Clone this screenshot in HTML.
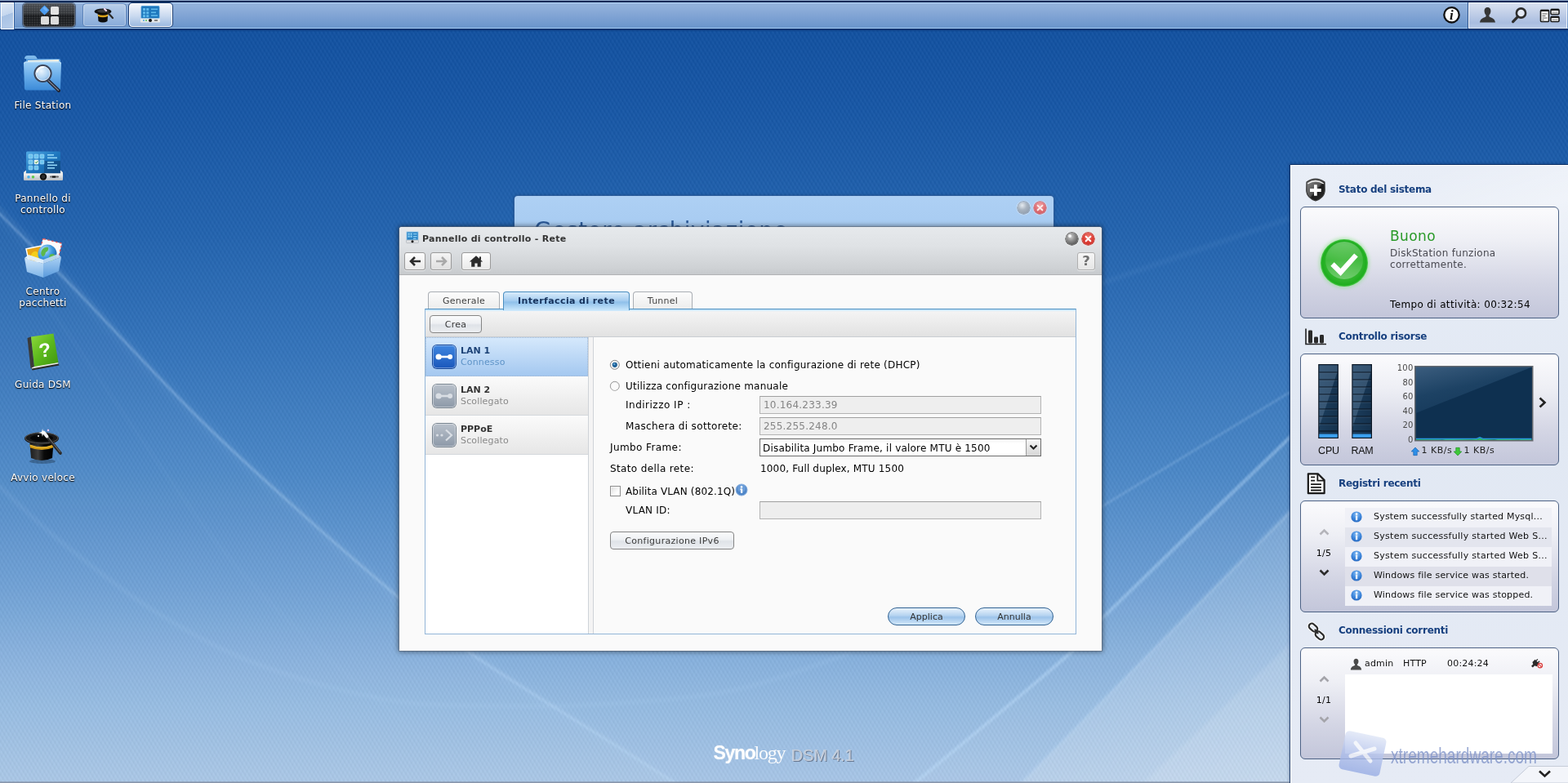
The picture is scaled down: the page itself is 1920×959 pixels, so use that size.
<!DOCTYPE html>
<html lang="it">
<head>
<meta charset="utf-8">
<title>Synology DiskStation - Pannello di controllo - Rete</title>
<style>
*{box-sizing:border-box;margin:0;padding:0}
html,body{width:1920px;height:959px;overflow:hidden}
body{position:relative;font-family:"DejaVu Sans","Liberation Sans",sans-serif;font-size:12px;color:#000;letter-spacing:.23px;
 background:#2a6ab4;}
#root{position:absolute;left:0;top:0;width:1920px;height:959px;overflow:hidden;will-change:transform}
.abs{position:absolute}
#bg{position:absolute;left:0;top:0;width:1920px;height:959px}
/* top bar */
#topbar{position:absolute;left:0;top:0;width:1920px;height:39px;background:linear-gradient(#0a2856 0,#0a2856 3px,#0a2856 34px,#07306c 36px,rgba(10,60,130,.75) 37px,rgba(14,76,156,0) 39px)}
#topbar .bar{position:absolute;left:0;top:3px;width:1920px;height:32px;
 background:linear-gradient(#bcd9fb 0,#bcd9fb 1px,#94b3dc 1.5px,#8aabd8 30%,#7ba0d2 62%,#6b96cb 30.5px,#a9cff8 31px,#a9cff8 32px)}
#topbar .hl{position:absolute;left:0;top:0;width:1920px;height:1px;background:#8fa5c8}
.tbtn{position:absolute;top:4px;height:29px;border-radius:4px}
/* desktop icons */
.dicon{position:absolute;left:0;width:105px;text-align:center;color:#fff;font-size:12px;line-height:14px;
 text-shadow:0 1px 1px rgba(0,0,0,.9),0 1px 2px rgba(0,0,0,.6);letter-spacing:.28px}
/* windows */
.win{position:absolute;background:#fafafa;border-radius:3px 3px 0 0;box-shadow:0 0 0 1px rgba(90,100,115,.5),0 0 6px 1px rgba(0,0,0,.5)}
.wbtn{position:absolute;width:15px;height:15px;border-radius:50%}
.nav{position:absolute;top:31px;height:22px;border:1px solid #9a9a9a;border-radius:3px;
 background:linear-gradient(#fdfdfd,#e9e9e9);box-shadow:0 1px 0 rgba(255,255,255,.6)}
.tab{position:absolute;top:79px;height:22px;border:1px solid #a9aeb4;border-bottom:none;border-radius:4px 4px 0 0;
 background:linear-gradient(#fcfcfc,#ececec);color:#444;text-align:center;line-height:22px;font-size:11px;letter-spacing:.25px}
.tab.on{border-color:#4a8ec0;background:linear-gradient(#d9ecfb 0,#a8cef0 45%,#8fc0ea 55%,#c8e6fb 100%);color:#15325c;font-weight:bold;font-size:11px;letter-spacing:.4px}
.lbl{position:absolute;white-space:nowrap;line-height:16px;height:16px}
.inp{position:absolute;left:441px;width:345px;height:22px;border:1px solid #b4b4b4;border-top-color:#a0a0a0;background:#eee;color:#858585;
 padding-left:4px;line-height:21px;font-size:12px;letter-spacing:.22px}
.gbtn{position:absolute;height:22px;border:1px solid #858585;border-radius:4px;background:linear-gradient(#fafbfc 0,#eef0f3 45%,#dfe3e8 55%,#eceef1 100%);
 text-align:center;line-height:21px;color:#3c3c3c;font-size:11px;letter-spacing:.3px}
.pill{position:absolute;top:466px;height:22px;border:1px solid #2f6192;border-radius:11px;
 background:linear-gradient(#e9f3fc 0,#b5d3f0 45%,#9cc3ea 55%,#d3e8fa 100%);text-align:center;line-height:21px;color:#333;font-size:11px;letter-spacing:0}
.li{position:absolute;left:0;width:199px;height:48px;background:linear-gradient(#fbfbfb,#e6e6e6);border-bottom:1px solid #d4d8dc}
.li.on{background:linear-gradient(#d6e9fc,#a4c8f0)}
.li b{position:absolute;left:43px;top:10px;font-size:11px;line-height:14px;color:#333;letter-spacing:0}
.li span{position:absolute;left:43px;top:24px;font-size:11px;line-height:14px;color:#8a8a8a;letter-spacing:.15px}
.li.on b{color:#1d4377}.li.on span{color:#5f94c8}
.lic{position:absolute;left:9px;top:10px;width:28px;height:28px;border-radius:5px}
/* widgets */
#wp{position:absolute;left:1580px;top:202px;width:340px;height:757px;background:linear-gradient(#e9eef7,#e1e8f3 40%,#e6ebf5);
 box-shadow:-1px 0 0 rgba(10,40,90,.8),0 -1px 0 rgba(10,40,90,.8),-2px -2px 3px rgba(0,20,60,.25),inset 1px 1px 0 rgba(255,255,255,.9)}
.wt{position:absolute;left:59px;font-weight:bold;font-size:12px;color:#17407f;white-space:nowrap;line-height:16px;letter-spacing:-.27px}
.card{position:absolute;left:12px;width:317px;height:137px;border:1px solid #4d6285;border-radius:6px;
 background:linear-gradient(#fbfbfd 0,#eeeff5 30%,#d3d5e4 70%,#c3c6da 100%)}
.row{position:absolute;left:54px;width:253px;height:24px;font-size:11px;line-height:22px;letter-spacing:.2px;white-space:nowrap;color:#111}
.row i{position:absolute;left:7px;top:4px;width:14px;height:14px}
.row span{position:absolute;left:35px;top:0}
</style>
</head>
<body>
<div id="root">
<svg id="bg" width="1920" height="959" viewBox="0 0 1920 959">
 <defs>
  <linearGradient id="bgg" x1="0" y1="0" x2="0" y2="1">
   <stop offset="0" stop-color="#0f4f9f"/>
   <stop offset=".12" stop-color="#1555a5"/>
   <stop offset=".3" stop-color="#2263af"/>
   <stop offset=".45" stop-color="#3474bb"/>
   <stop offset=".6" stop-color="#4a87c7"/>
   <stop offset=".75" stop-color="#6c9fd5"/>
   <stop offset=".83" stop-color="#84afdd"/>
   <stop offset=".9" stop-color="#95bbe2"/>
   <stop offset="1" stop-color="#a8c6e7"/>
  </linearGradient>
  <linearGradient id="wdg" x1="0" y1="0" x2="1" y2="1">
   <stop offset="0" stop-color="#fff" stop-opacity=".28"/>
   <stop offset=".5" stop-color="#fff" stop-opacity=".2"/>
   <stop offset="1" stop-color="#fff" stop-opacity=".3"/>
  </linearGradient>
  <pattern id="hatch" width="4.6" height="4.3" patternUnits="userSpaceOnUse" patternTransform="rotate(58)">
   <rect width="4.6" height="2.15" fill="#fff" opacity=".022"/>
   <rect y="2.15" width="4.6" height="2.15" fill="#000" opacity=".022"/>
  </pattern>
  <pattern id="hatch2" width="5" height="4.6" patternUnits="userSpaceOnUse" patternTransform="rotate(-63)">
   <rect width="5" height="2.5" fill="#fff" opacity=".012"/>
   <rect y="2.5" width="5" height="2.5" fill="#000" opacity=".012"/>
  </pattern>
  <filter id="b1" x="-20%" y="-20%" width="140%" height="140%"><feGaussianBlur stdDeviation="1"/></filter>
  <filter id="b2" x="-20%" y="-20%" width="140%" height="140%"><feGaussianBlur stdDeviation="2"/></filter>
  <filter id="b6" x="-20%" y="-20%" width="140%" height="140%"><feGaussianBlur stdDeviation="6"/></filter>
 </defs>
 <rect width="1920" height="959" fill="url(#bgg)"/>
 <!-- light wedges bottom-right -->
 <path d="M1250 959 L1580 625 L1620 590 L1620 959 Z" fill="url(#wdg)" filter="url(#b1)"/>
 <path d="M1400 959 L1620 750 L1620 959 Z" fill="#fff" opacity=".1" filter="url(#b2)"/>
 <path d="M1120 959 L1310 800 L1580 535 L1620 500 L1620 590 L1250 959 Z" fill="#fff" opacity=".05"/>
 <path d="M0 251 C20 272 64 316 103 358 C142 400 195 459 237 501 C279 543 314 574 356 612 C398 650 449 694 487 726 C525 758 540 771 586 802 C632 833 714 883 760 912 L830 959 L0 959 Z" fill="#fff" opacity=".035"/>
 <g fill="none" stroke="#bfe0ff" stroke-linecap="round">
  <g transform="translate(0 5)">
  <path d="M-20 236 C-17 240 -20 236 0 257 C20 278 64 320 103 361 C142 402 195 459 237 501 C279 543 314 574 356 612 C398 650 449 694 487 726 C525 758 540 771 586 802 C632 833 714 883 760 912 C806 941 843 964 860 975" stroke-width="10" opacity=".07" filter="url(#b6)"/>
  <path d="M-20 236 C-17 240 -20 236 0 257 C20 278 64 320 103 361 C142 402 195 459 237 501 C279 543 314 574 356 612 C398 650 449 694 487 726 C525 758 540 771 586 802 C632 833 714 883 760 912 C806 941 843 964 860 975" stroke-width="3" opacity=".3" filter="url(#b1)"/>
  </g>
  <path d="M-20 578 C-17 581 -16 581 0 596 C16 611 46 641 79 667 C112 693 158 730 198 754 C238 778 271 797 317 814 C363 831 422 848 475 857 C528 866 586 864 633 865 C680 866 716 864 760 861 C804 858 853 855 900 845 C947 835 1017 808 1040 800" stroke-width="4" opacity=".13" filter="url(#b2)"/>
  <path d="M60 380 C64 386 54 368 87 414 C120 460 212 597 261 659 C310 721 342 749 380 786 C418 823 457 851 490 881 C523 911 565 951 580 965" stroke-width="3" opacity=".05" filter="url(#b2)"/>
  <path d="M1340 626 C1380 602 1533 508 1580 480 C1627 452 1613 460 1620 456" stroke-width="3" opacity=".2" filter="url(#b1)"/>
  <path d="M1100 977 C1103 974 1085 988 1120 959 C1155 930 1272 834 1310 800 C1348 766 1305 801 1350 757 C1395 713 1535 578 1580 535 C1625 492 1613 503 1620 497" stroke-width="4.5" opacity=".4" filter="url(#b1)"/>
  <path d="M1340 350 C1380 336 1533 283 1580 267 C1627 251 1613 256 1620 254" stroke-width="6" opacity=".06" filter="url(#b2)"/>
  <path d="M1250 959 L1620 585" stroke-width="4" opacity=".2" filter="url(#b2)"/>
 </g>
 <rect width="1920" height="959" fill="url(#hatch)"/>
 <rect width="1920" height="959" fill="url(#hatch2)"/>
 <rect x="0" y="957.4" width="1920" height="1.6" fill="#8592a8" opacity=".95"/>
</svg>
<div id="topbar">
 <div class="hl"></div>
 <div class="bar"></div>
 <!-- show desktop -->
 <div class="abs" style="left:1px;top:3px;width:15.5px;height:32.5px;border:1.5px solid #fff;border-right-width:1px;background:linear-gradient(160deg,#dfe9f6 0,#c4d6ee 45%,#a8c2e4 46%,#b7cdea 100%);box-shadow:1px 0 0 #35609c"></div>
 <!-- main menu -->
 <div class="tbtn" style="left:28px;width:64px;background:radial-gradient(rgba(255,255,255,.13) .8px,rgba(255,255,255,0) 1.1px) 0 0/3px 3px,linear-gradient(#4a4d52 0,#33363a 45%,#1a1c1f 50%,#222427 100%);border:1px solid #5d6672;box-shadow:0 0 0 1px rgba(20,30,50,.55)">
  <svg width="62" height="27" viewBox="0 0 62 27" style="position:absolute;left:0;top:0">
   <rect x="21.2" y="3.2" width="8.6" height="8.6" rx="1.2" transform="rotate(45 25.5 7.5)" fill="#4c9cf0"/>
   <rect x="22.2" y="4.2" width="6" height="3" rx="1" transform="rotate(45 25.5 7.5)" fill="#7ebcff" opacity=".7"/>
   <rect x="33" y="3" width="10" height="10" rx="1.5" fill="#e3e3e3"/>
   <rect x="21" y="15" width="10" height="10" rx="1.5" fill="#dcdcdc"/>
   <rect x="33" y="15" width="10" height="10" rx="1.5" fill="#dcdcdc"/>
  </svg>
 </div>
 <!-- quick start -->
 <div class="tbtn" style="left:101px;width:54px;border:1px solid #5b82b8;background:linear-gradient(#b9cfeb,#88abd9);box-shadow:inset 0 0 0 1px rgba(255,255,255,.35)">
  <svg width="30" height="27" viewBox="0 0 30 27" style="position:absolute;left:11px;top:0">
   <ellipse cx="13" cy="9" rx="10.5" ry="3.6" fill="#111"/>
   <path d="M6.5 9 L7.5 21 Q13 24 18.5 21 L19.5 9 Z" fill="#0c0c0c"/>
   <path d="M6.8 12.5 Q13 15 19.2 12.5 L19 15 Q13 17.5 7 15 Z" fill="#d9a21a"/>
   <ellipse cx="13" cy="8.6" rx="7" ry="2" fill="#3a3a3a"/>
   <path d="M16 7 L25 17" stroke="#2a2a2a" stroke-width="2.2" stroke-linecap="round"/>
   <path d="M15 6 L17 8" stroke="#f4d8f0" stroke-width="2.2" stroke-linecap="round"/>
  </svg>
 </div>
 <!-- active: control panel -->
 <div class="tbtn" style="left:157.5px;width:53px;border:1.5px solid #fff;background:linear-gradient(#f4f7fc 0,#c9d9ef 55%,#9dbae0 100%);box-shadow:0 0 0 1px #1e3f74">
  <svg width="24" height="22" viewBox="0 0 24 22" style="position:absolute;left:13px;top:2px">
   <rect x="1" y="0.5" width="22" height="15" rx="1" fill="#1f78bd"/>
   <rect x="1" y="0.5" width="22" height="15" rx="1" fill="none" stroke="#4a9ad6" stroke-width=".8"/>
   <g fill="#5fb8ea"><rect x="3" y="3" width="3" height="3"/><rect x="7.2" y="3" width="3" height="3"/><rect x="3" y="7.2" width="3" height="3"/><rect x="7.2" y="7.2" width="3" height="3"/><rect x="3" y="11.2" width="3" height="3"/><rect x="7.2" y="11.2" width="3" height="3"/>
   <rect x="13" y="3.5" width="8" height="1.6"/><rect x="13" y="7.5" width="6" height="1.6"/><rect x="13" y="11.2" width="8" height="1.6"/></g>
   <rect x="0" y="15.5" width="24" height="5" rx="1.2" fill="#e6e8ea"/>
   <circle cx="12" cy="18" r="2" fill="#111"/>
   <circle cx="4" cy="18" r="1" fill="#4aa4e0"/><circle cx="7" cy="18" r="1" fill="#5ac85a"/>
   <rect x="17" y="17.3" width="4" height="1.4" fill="#555"/>
  </svg>
 </div>
 <!-- info -->
 <svg class="abs" style="left:1766px;top:7px" width="23" height="23" viewBox="0 0 23 23">
  <circle cx="11.5" cy="11.3" r="9.2" fill="#fdfdfd" stroke="#111" stroke-width="2.3"/>
  <text x="11.3" y="17" text-anchor="middle" font-family="Liberation Serif,serif" font-style="italic" font-weight="bold" font-size="17" fill="#111" letter-spacing="0">i</text>
 </svg>
 <!-- tray -->
 <div class="abs" style="left:1797px;top:3px;width:1px;height:32px;background:#2d5590"></div>
 <div class="abs" style="left:1798px;top:3px;width:121px;height:32px;border:1px solid #f2f6fc;border-bottom-color:#e0e9f6;background:linear-gradient(#d9e1f0 0,#bccbe6 50%,#a9bde0 80%,#b7c9e6 100%)"></div>
 <svg class="abs" style="left:1810px;top:7px" width="24" height="24" viewBox="0 0 24 24">
  <path d="M11.5 2 C8.6 2 7.4 4.3 7.6 7 C7.8 9.3 8.6 10.6 9.6 11.6 L9.4 13.4 C6.6 14.8 2.6 15.6 2 20.5 L21 20.5 C20.4 15.6 16.4 14.8 13.6 13.4 L13.4 11.6 C14.4 10.6 15.2 9.3 15.4 7 C15.6 4.3 14.4 2 11.5 2 Z" fill="#363636"/>
 </svg>
 <svg class="abs" style="left:1849px;top:7px" width="24" height="24" viewBox="0 0 24 24">
  <circle cx="13.5" cy="9" r="5.6" fill="#e4eaf5" stroke="#2d2d2d" stroke-width="2.6"/>
  <path d="M9.6 13.4 L3.6 19.6" stroke="#2d2d2d" stroke-width="3.2" stroke-linecap="round"/>
 </svg>
 <svg class="abs" style="left:1885px;top:9px" width="26" height="20" viewBox="0 0 26 20">
  <rect x="1.5" y="3.5" width="10" height="14" rx="1" fill="#fff" stroke="#1a1a1a" stroke-width="1.6"/>
  <rect x="1.5" y="2.8" width="10" height="2.2" fill="#1a1a1a"/>
  <path d="M3.5 8h6M3.5 10.5h4M3.5 13h6M3.5 15.3h2" stroke="#555" stroke-width="1"/>
  <rect x="14" y="2.5" width="10" height="6" rx="1" fill="#fff" stroke="#1a1a1a" stroke-width="1.6"/>
  <rect x="14" y="1.8" width="10" height="2.2" fill="#1a1a1a"/>
  <rect x="14" y="11.5" width="10" height="6" rx="1" fill="#fff" stroke="#1a1a1a" stroke-width="1.6"/>
  <rect x="14" y="10.8" width="10" height="2.2" fill="#1a1a1a"/>
  <path d="M16 6h1.5M18.3 6h1.5M20.6 6h1.5M16 15h1.5M18.3 15h1.5M20.6 15h1.5" stroke="#444" stroke-width="1"/>
 </svg>
</div>
<!-- File Station -->
<svg class="abs" style="left:26px;top:64px" width="54" height="52" viewBox="0 0 54 52">
 <defs>
  <linearGradient id="fs1" x1="0" y1="0" x2="0" y2="1"><stop offset="0" stop-color="#9fd0f6"/><stop offset=".5" stop-color="#69adea"/><stop offset="1" stop-color="#3c8bd8"/></linearGradient>
  <radialGradient id="fs2" cx=".4" cy=".35" r=".7"><stop offset="0" stop-color="#f4faff"/><stop offset=".6" stop-color="#b8d8f4"/><stop offset="1" stop-color="#7fb4e6"/></radialGradient>
 </defs>
 <path d="M4 8 Q4 4 8 4 L16 4 Q18 4 19 6.5 L20 8.5 Z" fill="#7db8ea"/>
 <path d="M6 8 L46 8 Q48 8 48 10 L48 14 L6 14 Z" fill="#5a9ede"/>
 <path d="M8 10 L46 9 L46.5 13 L8 14 Z" fill="#f6f3e4"/>
 <path d="M3 14 Q3 11.5 5.5 11.5 L46.5 11.5 Q49 11.5 49 14 L48 44 Q48 46.5 45.5 46.5 L6.5 46.5 Q4 46.5 4 44 Z" fill="url(#fs1)"/>
 <path d="M3.5 13.8 Q3.5 12 5.5 12 L46.5 12 Q48.5 12 48.5 13.8" fill="none" stroke="#c9e6fb" stroke-width="1"/>
 <path d="M31.5 33 L46 47" stroke="#1f2433" stroke-width="4" stroke-linecap="round"/>
 <path d="M31.5 33 L45.5 46.5" stroke="#7f8796" stroke-width="1.3" stroke-linecap="round"/>
 <circle cx="26.5" cy="26" r="10" fill="url(#fs2)" stroke="#3b4458" stroke-width="2.2" fill-opacity=".92"/>
 <circle cx="26.5" cy="26" r="8.6" fill="none" stroke="#e8eef6" stroke-width="1"/>
 <path d="M19.5 24 Q21 18.5 27 18" fill="none" stroke="#fff" stroke-width="2" stroke-linecap="round" opacity=".9"/>
</svg>
<div class="dicon" style="top:122px">File Station</div>
<!-- Pannello di controllo -->
<svg class="abs" style="left:26px;top:183px" width="54" height="42" viewBox="0 0 54 42">
 <defs>
  <linearGradient id="cp1" x1="0" y1="0" x2="1" y2="1"><stop offset="0" stop-color="#4fa8e4"/><stop offset=".5" stop-color="#1f78c0"/><stop offset="1" stop-color="#135a9c"/></linearGradient>
  <linearGradient id="cp2" x1="0" y1="0" x2="0" y2="1"><stop offset="0" stop-color="#f4f5f6"/><stop offset="1" stop-color="#b9bdc2"/></linearGradient>
 </defs>
 <rect x="6" y="2.5" width="42" height="27" rx="1.5" fill="url(#cp1)"/>
 <rect x="28" y="14" width="20" height="15" fill="#0f3f74" opacity=".55"/>
 <g fill="#6cc4f0" stroke="#bfe6fb" stroke-width=".5">
  <rect x="9" y="6" width="5" height="5" rx="1"/><rect x="16" y="6" width="5" height="5" rx="1"/><rect x="23" y="6" width="5" height="5" rx="1"/>
  <rect x="9" y="13" width="5" height="5" rx="1"/><rect x="23" y="13" width="5" height="5" rx="1"/>
  <rect x="9" y="20" width="5" height="5" rx="1"/><rect x="16" y="20" width="5" height="5" rx="1"/>
 </g>
 <rect x="16" y="13" width="5" height="5" rx="1" fill="#eaf6e8" stroke="#fff" stroke-width=".5"/>
 <path d="M17 15.4l1.3 1.4 2-2.6" fill="none" stroke="#2e8a3a" stroke-width="1"/>
 <g fill="#8fd4f6"><rect x="32" y="6" width="8" height="1.6"/><rect x="32" y="9.5" width="12" height="1.6"/><rect x="32" y="15" width="8" height="1.6"/><rect x="32" y="18.5" width="12" height="1.6"/><rect x="32" y="22" width="9" height="1.6"/></g>
 <path d="M3 28 L6 25.5 L6 29.5 L48 29.5 L48 25.5 L51 28 L51 36 Q51 38 49 38 L5 38 Q3 38 3 36 Z" fill="url(#cp2)"/>
 <rect x="3" y="29.5" width="48" height="8.5" rx="1.6" fill="url(#cp2)"/>
 <circle cx="27" cy="33.5" r="4.2" fill="#0d0d0d"/><circle cx="27" cy="33.5" r="2.4" fill="#2c2c2c"/>
 <circle cx="9" cy="33.8" r="1.8" fill="#4ab0ea"/><circle cx="14.5" cy="33.8" r="1.8" fill="#5fcb4e"/>
 <rect x="35" y="32.6" width="11" height="2" rx="1" fill="#666"/><rect x="38" y="32.6" width="4" height="2" fill="#111"/>
</svg>
<div class="dicon" style="top:236px">Pannello di<br>controllo</div>
<!-- Centro pacchetti -->
<svg class="abs" style="left:26px;top:292px" width="54" height="50" viewBox="0 0 54 50">
 <defs>
  <linearGradient id="pk1" x1="0" y1="0" x2="0" y2="1"><stop offset="0" stop-color="#cfe6fb"/><stop offset="1" stop-color="#7db4e8"/></linearGradient>
  <linearGradient id="pk2" x1="0" y1="0" x2="0" y2="1"><stop offset="0" stop-color="#a9d0f4"/><stop offset="1" stop-color="#5a9adc"/></linearGradient>
  <radialGradient id="pk3" cx=".35" cy=".3" r=".8"><stop offset="0" stop-color="#bfe4fb"/><stop offset=".5" stop-color="#3f9ae0"/><stop offset="1" stop-color="#155a9e"/></radialGradient>
 </defs>
 <rect x="24" y="3" width="24" height="18" rx="1" transform="rotate(14 36 12)" fill="#fbfbfb" stroke="#e25a5a" stroke-width="1.4" stroke-dasharray="2.5 2.5"/>
 <rect x="7" y="10" width="20" height="20" transform="rotate(-12 17 20)" fill="#fff"/>
 <rect x="8.5" y="11.5" width="17" height="17" transform="rotate(-12 17 20)" fill="#e8a416"/>
 <path d="M11 22 Q15 13 20 17 Q24 20 22 27 Z" fill="#f6d21a" opacity=".9"/>
 <circle cx="32" cy="19" r="11.5" fill="url(#pk3)"/>
 <path d="M25 15 Q28 10 33 11 Q34 15 30 17 Q29 22 26 22 Q23 19 25 15 Z M35 20 Q40 17 42 22 Q40 28 36 28 Q33 24 35 20 Z" fill="#5cb84a"/>
 <path d="M4 24 L27 31 L27 48 L7 41 Z" fill="url(#pk1)"/>
 <path d="M27 31 L49 23 L46 40 L27 48 Z" fill="url(#pk2)"/>
 <path d="M4 24 L9 20 L27 26 L27 31 Z" fill="#e3f1fd" opacity=".95"/>
 <path d="M27 31 L27 26 L45 19 L49 23 Z" fill="#c2dcf6" opacity=".9"/>
</svg>
<div class="dicon" style="top:350px">Centro<br>pacchetti</div>
<!-- Guida DSM -->
<svg class="abs" style="left:30px;top:406px" width="46" height="50" viewBox="0 0 46 50">
 <defs>
  <linearGradient id="gd1" x1="0" y1="0" x2="1" y2="1"><stop offset="0" stop-color="#8fda3c"/><stop offset=".5" stop-color="#5cb81c"/><stop offset="1" stop-color="#3d9410"/></linearGradient>
 </defs>
 <path d="M8 44 L41 38.5 L42.5 41.5 L9.5 47.5 Z" fill="#2b2b2b"/>
 <path d="M8.5 43 L41 37.5 L41.5 39.5 L9 45.5 Z" fill="#e9e9e4"/>
 <path d="M3.5 8 L8 6.5 L12 43 L7.5 45 Z" fill="#3a3a3a"/>
 <path d="M8 6.5 L35.5 2.5 L41.5 38 L12 43 Z" fill="url(#gd1)"/>
 <text x="25" y="31" text-anchor="middle" font-family="Liberation Sans,sans-serif" font-weight="bold" font-size="24" fill="#fff" transform="rotate(-8 25 24)" letter-spacing="0">?</text>
</svg>
<div class="dicon" style="top:464px">Guida DSM</div>
<!-- Avvio veloce -->
<svg class="abs" style="left:26px;top:520px" width="54" height="52" viewBox="0 0 54 52">
 <defs>
  <linearGradient id="ht1" x1="0" y1="0" x2="1" y2="0"><stop offset="0" stop-color="#1a1a1a"/><stop offset=".35" stop-color="#3c3c3c"/><stop offset=".6" stop-color="#0a0a0a"/><stop offset="1" stop-color="#000"/></linearGradient>
 </defs>
 <ellipse cx="26" cy="45" rx="16" ry="3" fill="#000" opacity=".25"/>
 <path d="M10 17 L12 41 Q25 47 38 41 L40 17 Z" fill="url(#ht1)"/>
 <path d="M10.6 24.5 Q25 30 39.4 24.5 L39.1 28.2 Q25 33.8 10.9 28.2 Z" fill="#d39a14"/>
 <path d="M10.7 25.3 Q25 31 39.3 25.3" fill="none" stroke="#f2c848" stroke-width=".8"/>
 <ellipse cx="25" cy="17" rx="21" ry="7.5" fill="#1a1a1a"/>
 <ellipse cx="25" cy="16.4" rx="20" ry="6.6" fill="none" stroke="#5a5a5a" stroke-width="1"/>
 <ellipse cx="25" cy="16.5" rx="14" ry="4.2" fill="#050505"/>
 <path d="M30 13 L48 35" stroke="#2a2a2a" stroke-width="3.6" stroke-linecap="round"/>
 <path d="M30.5 12.5 L47.5 33.5" stroke="#7a7a7a" stroke-width="1" stroke-linecap="round"/>
 <path d="M27.5 9.5 L31.5 14.5" stroke="#f2f2f2" stroke-width="3.8" stroke-linecap="round"/>
 <path d="M26 5 L27 9 L31 10 L27 11 L26 15 L25 11 L21 10 L25 9 Z" fill="#fff" opacity=".95"/>
 <circle cx="33" cy="7" r="1.2" fill="#f4c8f4"/><circle cx="21" cy="14" r="1" fill="#fff"/>
</svg>
<div class="dicon" style="top:578px">Avvio veloce</div>
<!-- logo -->
<div class="abs" style="left:873.5px;top:905px;width:180px;height:34px;white-space:nowrap">
 <span class="abs" style="left:0;top:3px;font-family:'Liberation Sans',sans-serif;font-weight:bold;font-size:23px;line-height:28px;color:#fff;letter-spacing:-1.3px;text-shadow:0 0 2px rgba(255,255,255,.4)">Syno</span>
 <span class="abs" style="left:50px;top:3px;font-family:'Liberation Serif',serif;font-size:24px;line-height:28px;color:#fff;letter-spacing:-1.2px;opacity:.95">logy</span>
 <span class="abs" style="left:95.5px;top:5.5px;font-family:'Liberation Sans',sans-serif;font-size:20px;line-height:28px;color:#c3cbd8;letter-spacing:-.15px;text-shadow:1px 1px 0 rgba(80,90,110,.7),-.5px -.5px 0 rgba(240,245,252,.5)">DSM 4.1</span>
</div>
<!-- background window: Gestore archiviazione -->
<div class="abs" style="left:630px;top:240px;width:660px;height:60px;background:linear-gradient(#aed0f4,#a4c9f0);border-radius:4px 4px 0 0;box-shadow:0 0 0 1px rgba(60,100,160,.5),0 0 4px rgba(0,0,0,.3);overflow:hidden">
 <div class="abs" style="left:24px;top:25px;font-size:27.5px;line-height:34px;color:#2c5a98;white-space:nowrap;letter-spacing:.6px">Gestore archiviazione</div>
 <div class="wbtn" style="left:615.5px;top:6.6px;background:radial-gradient(circle at 38% 30%,#e4eaf0 0,#a9b4c1 40%,#8593a3 100%);box-shadow:0 0 0 .7px #8797ab,0 0 0 1.6px rgba(220,235,250,.6)"></div>
 <div class="wbtn" style="left:635.5px;top:6.6px;background:radial-gradient(circle at 50% 30%,#f2a2a4 0,#dc6c72 55%,#cc545c 100%);box-shadow:0 0 0 .7px #bf6c7a,0 0 0 1.6px rgba(230,235,250,.6)">
  <svg width="15" height="15" viewBox="0 0 17 17"><path d="M5.3 5.3l6.4 6.4M11.7 5.3l-6.4 6.4" stroke="#fbeaea" stroke-width="2.3" stroke-linecap="round"/></svg>
 </div>
</div>
<!-- main window -->
<div class="win" id="mw" style="left:489px;top:278px;width:859.6px;height:519.4px">
 <div class="abs" style="left:0;top:0;width:860px;height:59px;background:linear-gradient(#e6e9ec 0,#dfe2e5 40%,#cfd2d5 85%,#c7cacd 100%);border-bottom:1px solid #b2b3b5;border-radius:3px 3px 0 0"></div>
 <svg class="abs" style="left:8px;top:5px" width="16" height="16" viewBox="0 0 16 16">
  <rect x="1" y="1" width="14" height="10" fill="#2a84c6" stroke="#8ec4e8" stroke-width=".8"/>
  <g fill="#8fd0f4"><rect x="2.5" y="2.5" width="2.2" height="2.2"/><rect x="5.5" y="2.5" width="2.2" height="2.2"/><rect x="2.5" y="5.5" width="2.2" height="2.2"/><rect x="5.5" y="5.5" width="2.2" height="2.2"/><rect x="9" y="3" width="4.5" height="1.2"/><rect x="9" y="6" width="4.5" height="1.2"/><rect x="9" y="8.6" width="3.5" height="1.2"/></g>
  <rect x="0.5" y="11" width="15" height="3.6" rx="1" fill="#dfe1e4" stroke="#9aa0a6" stroke-width=".5"/>
  <circle cx="8" cy="12.8" r="1.5" fill="#111"/>
 </svg>
 <div class="lbl" style="left:28px;top:7px;font-weight:bold;font-size:11px;color:#333;letter-spacing:.27px">Pannello di controllo - Rete</div>
 <div class="wbtn" style="left:815.5px;top:6.5px;background:radial-gradient(circle at 40% 32%,#d0d0d0 0,#8c8c8c 40%,#5a5a5a 75%,#707070 100%);box-shadow:0 0 0 .7px #4c4c4c,0 0 0 1.6px rgba(250,250,250,.55)">
  <div class="abs" style="left:3.4px;top:2.8px;width:4px;height:4px;border-radius:50%;background:rgba(255,255,255,.85)"></div>
 </div>
 <div class="wbtn" style="left:835.5px;top:6.5px;background:radial-gradient(circle at 50% 30%,#ee7a72 0,#dc3e36 50%,#cc2c24 100%);box-shadow:0 0 0 .7px #b02a24,0 0 0 1.6px rgba(255,235,235,.6)">
  <svg width="15" height="15" viewBox="0 0 17 17"><path d="M5.3 5.3l6.4 6.4M11.7 5.3l-6.4 6.4" stroke="#fff" stroke-width="2.4" stroke-linecap="round"/></svg>
 </div>
 <div class="nav" style="left:6px;width:26px"><svg width="25" height="20" viewBox="0 0 25 20"><path d="M19 10H7.5M12 5l-5 5 5 5" fill="none" stroke="#2b2b2b" stroke-width="2.6" stroke-linejoin="miter"/></svg></div>
 <div class="nav" style="left:38px;width:26px;background:linear-gradient(#f4f4f4,#e0e0e0)"><svg width="25" height="20" viewBox="0 0 25 20"><path d="M6 10h11.5M13 5l5 5-5 5" fill="none" stroke="#a9a9a9" stroke-width="2.6"/></svg></div>
 <div class="nav" style="left:76px;width:36px"><svg width="34" height="20" viewBox="0 0 34 20"><path d="M17 3.2L8.8 10.6h2.4v6.2h4.2v-4.4h3.2v4.4h4.2v-6.2h2.4Z" fill="#2b2b2b"/><rect x="21" y="4.4" width="2" height="3.6" fill="#2b2b2b"/></svg></div>
 <div class="nav" style="left:830px;width:22px;text-align:center;font-family:'DejaVu Sans',sans-serif;font-weight:bold;font-size:16.5px;line-height:20px;color:#707070;letter-spacing:0;border-color:#b0b0b0;background:linear-gradient(#f6f6f6,#e6e6e6)">?</div>
 <!-- tabs -->
 <div class="tab" style="left:35px;width:88px">Generale</div>
 <div class="tab" style="left:286px;width:73px">Tunnel</div>
 <!-- tab panel -->
 <div class="abs" id="tp" style="left:31px;top:100px;width:798px;height:399px;border:1px solid #93b6d8;border-top:1px solid #4b8fc1;background:#fafafa">
  <div class="abs" style="left:0;top:0;width:796px;height:2px;background:#cfe9fc"></div>
  <div class="abs" style="left:0;top:2px;width:796px;height:32px;background:linear-gradient(#f4f4f4,#e2e2e2);border-bottom:1px solid #c9cdd2"></div>
  <div class="gbtn" style="left:5px;top:7px;width:64px">Crea</div>
  <!-- list -->
  <div class="abs" style="left:0;top:34px;width:199px;height:363px;background:#fff">
   <div class="li on" style="top:0;border-bottom-color:#a9c7ea;outline:1px dotted #9bb6d6;outline-offset:-1px">
    <div class="lic" style="background:linear-gradient(#3f86e0,#1a57bb);box-shadow:0 0 0 1px #16489a,inset 0 0 0 1px rgba(255,255,255,.35)"><svg width="28" height="28" viewBox="1.5 1.5 28 28"><path d="M9 15.5h13" stroke="#fff" stroke-width="2.6"/><circle cx="8.6" cy="15.5" r="3.6" fill="#fff"/><circle cx="22.6" cy="15.5" r="3" fill="#fff"/></svg></div>
    <b>LAN 1</b><span>Connesso</span>
   </div>
   <div class="li" style="top:48px">
    <div class="lic" style="background:linear-gradient(#b9c1cb,#8d99a8);box-shadow:0 0 0 1px #77838f,inset 0 0 0 1px rgba(255,255,255,.4)"><svg width="28" height="28" viewBox="1.5 1.5 28 28"><path d="M9 15.5h13" stroke="#d9dee4" stroke-width="2.6"/><circle cx="8.6" cy="15.5" r="3.6" fill="#d9dee4"/><circle cx="22.6" cy="15.5" r="3" fill="#d9dee4"/></svg></div>
    <b>LAN 2</b><span>Scollegato</span>
   </div>
   <div class="li" style="top:96px">
    <div class="lic" style="background:linear-gradient(#b9c1cb,#8d99a8);box-shadow:0 0 0 1px #77838f,inset 0 0 0 1px rgba(255,255,255,.4)"><svg width="28" height="28" viewBox="1.5 1.5 28 28"><circle cx="7" cy="15.5" r="1.6" fill="#d9dee4"/><circle cx="12.5" cy="15.5" r="1.6" fill="#d9dee4"/><path d="M17.5 9l7 6.5-7 6.5" fill="none" stroke="#d9dee4" stroke-width="2.2"/></svg></div>
    <b>PPPoE</b><span>Scollegato</span>
   </div>
  </div>
  <div class="abs" style="left:199px;top:34px;width:7px;height:363px;background:#f4f4f4;border-left:1px solid #cfd3d8;border-right:1px solid #cfd3d8"></div>
 </div>
 <div class="tab on" style="left:127px;width:155px;height:23px">Interfaccia di rete</div>
 <!-- form -->
 <svg class="abs" style="left:257px;top:162px" width="14" height="14" viewBox="0 0 14 14"><circle cx="6.8" cy="6.8" r="5.5" fill="#f2f2f2" stroke="#8a8a8a" stroke-width="1"/><circle cx="6.8" cy="6.8" r="3.1" fill="#1c5f96"/><circle cx="6.2" cy="6" r="1.2" fill="#5fa4d4"/></svg>
 <div class="lbl" style="left:277px;top:161px">Ottieni automaticamente la configurazione di rete (DHCP)</div>
 <svg class="abs" style="left:257px;top:188px" width="14" height="14" viewBox="0 0 14 14"><circle cx="6.8" cy="6.8" r="5.5" fill="#f0f0f0" stroke="#9a9a9a" stroke-width="1"/><circle cx="6.8" cy="7.4" r="4.4" fill="#fbfbfb"/></svg>
 <div class="lbl" style="left:277px;top:187px">Utilizza configurazione manuale</div>
 <div class="lbl" style="left:277px;top:210px;letter-spacing:.5px">Indirizzo IP :</div>
 <div class="inp" style="top:207px">10.164.233.39</div>
 <div class="lbl" style="left:277px;top:236px;letter-spacing:.35px">Maschera di sottorete:</div>
 <div class="inp" style="top:233px">255.255.248.0</div>
 <div class="lbl" style="left:258px;top:262px;letter-spacing:.4px">Jumbo Frame:</div>
 <div class="abs" style="left:441px;top:259px;width:345px;height:22px;border:1px solid #6d6d6d;background:linear-gradient(#f0f0f0 0,#fff 5px);padding-left:3px;line-height:22px;font-size:12px;white-space:nowrap;letter-spacing:.2px">Disabilita Jumbo Frame, il valore MTU è 1500
  <div class="abs" style="right:0;top:0;width:18px;height:20px;border-left:1px solid #9a9a9a;background:linear-gradient(#f6f6f6,#d6d6d6)"><svg width="17" height="20" viewBox="0 0 17 20"><path d="M4.5 7.5l4 4 4-4" fill="none" stroke="#222" stroke-width="2.2"/></svg></div>
 </div>
 <div class="lbl" style="left:258px;top:288px;letter-spacing:.37px">Stato della rete:</div>
 <div class="lbl" style="left:442px;top:288px;letter-spacing:.17px">1000, Full duplex, MTU 1500</div>
 <div class="abs" style="left:258px;top:317px;width:13px;height:13px;border:1px solid #8f8f8f;background:linear-gradient(135deg,#dcdcdc,#fff 70%);box-shadow:inset 0 0 0 1px #f4f4f4"></div>
 <div class="lbl" style="left:277px;top:316px;letter-spacing:.15px">Abilita VLAN (802.1Q)</div>
 <svg class="abs" style="left:411px;top:314px" width="16" height="16" viewBox="0 0 16 16"><circle cx="8" cy="8" r="7" fill="#4f86c8" stroke="#86aede" stroke-width="1"/><circle cx="8" cy="6" r="5" fill="#8cb8ea" opacity=".45"/><rect x="7" y="6.6" width="2.2" height="5.4" fill="#fff"/><rect x="6.2" y="6.6" width="2" height="1.2" fill="#fff"/><circle cx="8" cy="4.4" r="1.3" fill="#fff"/></svg>
 <div class="lbl" style="left:277px;top:339px">VLAN ID:</div>
 <div class="inp" style="top:336px"></div>
 <div class="gbtn" style="left:258px;top:373px;width:152px">Configurazione IPv6</div>
 <div class="pill" style="left:598px;width:95px">Applica</div>
 <div class="pill" style="left:705px;width:96px">Annulla</div>
</div>
<div id="wp">
<div class="abs" style="left:0;top:-1px;width:340px;height:758px">
 <div class="abs" style="left:0;top:1px;width:340px;height:757px;overflow:hidden">
  <div class="abs" style="left:60px;top:-80px;width:500px;height:260px;background:linear-gradient(160deg,rgba(255,255,255,0) 30%,rgba(255,255,255,.35) 50%,rgba(255,255,255,0) 70%)"></div>
 </div>
 <!-- titles -->
 <svg class="abs" style="left:18px;top:17px" width="26" height="29" viewBox="0 0 26 29">
  <defs><linearGradient id="sh1" x1="0" y1="0" x2="1" y2="1"><stop offset="0" stop-color="#8a8a8a"/><stop offset=".5" stop-color="#555"/><stop offset=".56" stop-color="#1c1c1c"/><stop offset="1" stop-color="#2c2c2c"/></linearGradient></defs>
  <path d="M2 5 Q12.9 -2.6 24 5 L24.2 15 C24.2 21.5 18.6 26.6 12.9 27.8 C7.2 26.6 1.7 21.5 1.7 15 Z" fill="url(#sh1)" stroke="#3a3a3a" stroke-width="1.2" stroke-linejoin="round"/>
  <path d="M3.2 7 Q12.9 0.6 22.8 7" fill="none" stroke="#fff" stroke-width="1.4" opacity=".95"/>
  <path d="M11 8.3h3.7v4.7h5v4h-5v4.8H11V17H6v-4h5Z" fill="#fff"/>
 </svg>
 <div class="wt" style="top:23px">Stato del sistema</div>
 <svg class="abs" style="left:17px;top:200px" width="28" height="22" viewBox="0 0 28 22">
  <path d="M2 1.5V20.5H27" fill="none" stroke="#222" stroke-width="1.6"/>
  <rect x="5" y="3.5" width="5" height="16" rx="1.4" fill="#2a2a2a"/>
  <rect x="12" y="11.5" width="5" height="8" rx="1.4" fill="#2a2a2a"/>
  <rect x="19" y="9" width="5" height="10.5" rx="1.4" fill="#2a2a2a"/>
 </svg>
 <div class="wt" style="top:203px">Controllo risorse</div>
 <svg class="abs" style="left:19px;top:377px" width="25" height="28.5" viewBox="0 0 27 31">
  <path d="M3 2.5H16L24.5 11V28.5H3Z" fill="#fff" stroke="#1b1b1b" stroke-width="2.4" stroke-linejoin="round"/>
  <path d="M15.5 2.5V11.5H24.5" fill="none" stroke="#1b1b1b" stroke-width="2"/>
  <path d="M6.5 7h5.5M6.5 11.5h5.5M6.5 16.5h14M6.5 20.5h14M6.5 24.5h14" stroke="#1b1b1b" stroke-width="2"/>
 </svg>
 <div class="wt" style="top:383px">Registri recenti</div>
 <svg class="abs" style="left:19px;top:559px" width="26" height="27" viewBox="0 0 28 29">
  <g fill="none" stroke="#fff" stroke-width="4.6" opacity=".85"><rect x="3.5" y="5.5" width="12.5" height="7.5" rx="3.7" transform="rotate(42 9.7 9.2)"/><rect x="12" y="16" width="12.5" height="7.5" rx="3.7" transform="rotate(42 18.2 19.7)"/></g>
  <g fill="none" stroke="#2b2b2b" stroke-width="2.3"><rect x="3.5" y="5.5" width="12.5" height="7.5" rx="3.7" transform="rotate(42 9.7 9.2)"/><rect x="12" y="16" width="12.5" height="7.5" rx="3.7" transform="rotate(42 18.2 19.7)"/><path d="M11.8 11.6L16.2 17.2" stroke-width="2.2"/></g>
 </svg>
 <div class="wt" style="top:563px">Connessioni correnti</div>
 <!-- card 1 -->
 <div class="card" style="top:52px">
  <svg class="abs" style="left:17px;top:31.5px" width="72" height="72" viewBox="0 0 72 72">
   <defs>
    <radialGradient id="ok1" cx=".5" cy=".5" r=".5"><stop offset="0" stop-color="#3fb83a"/><stop offset=".75" stop-color="#2fb52c"/><stop offset=".93" stop-color="#1fae1f"/><stop offset="1" stop-color="#4cc84a"/></radialGradient>
    <linearGradient id="ok2" x1="0" y1="0" x2="0" y2="1"><stop offset="0" stop-color="#fff" stop-opacity=".3"/><stop offset=".5" stop-color="#fff" stop-opacity=".08"/><stop offset="1" stop-color="#fff" stop-opacity=".3"/></linearGradient>
    <filter id="okb" x="-30%" y="-30%" width="160%" height="160%"><feGaussianBlur stdDeviation="2.2"/></filter>
   </defs>
   <circle cx="36" cy="36" r="30.5" fill="#7fe07a" opacity=".55" filter="url(#okb)"/>
   <circle cx="36" cy="36" r="29" fill="url(#ok1)"/>
   <circle cx="36" cy="33" r="23" fill="url(#ok2)"/>
   <path d="M21.5 37.5 L31.5 47.5 L50.5 26.5" fill="none" stroke="#fff" stroke-width="6.2"/>
  </svg>
  <div class="lbl" style="left:109px;top:24px;font-size:17px;line-height:22px;height:22px;color:#2a9a28;letter-spacing:.4px">Buono</div>
  <div class="lbl" style="left:109px;top:49px;color:#4a4a52;line-height:14px;height:28px;letter-spacing:.29px">DiskStation funziona<br>correttamente.</div>
  <div class="lbl" style="left:109px;top:111px;letter-spacing:.36px">Tempo di attività: 00:32:54</div>
 </div>
 <!-- card 2 -->
 <div class="card" style="top:232px">
  <svg class="abs" style="left:20px;top:11px" width="70" height="93" viewBox="0 0 70 93">
   <defs>
    <linearGradient id="br1" x1="0" y1="0" x2="1" y2="0"><stop offset="0" stop-color="#1c3d5c"/><stop offset="1" stop-color="#15324e"/></linearGradient>
   </defs>
   <g id="bar1">
    <rect x="1.2" y="1" width="24.7" height="91" fill="#0a1624"/>
    <rect x="2.4" y="2.2" width="22.3" height="88.6" fill="url(#br1)"/>
    <path d="M2.4 2.2H24.7V10L2.4 78Z" fill="#7f9cb8" opacity=".3"/>
    <path d="M2.4 11h22.3M2.4 20h22.3M2.4 29h22.3M2.4 38h22.3M2.4 47h22.3M2.4 56h22.3M2.4 65h22.3M2.4 74h22.3M2.4 83h22.3" stroke="#07111c" stroke-width="1.2"/>
    <path d="M2.4 12h22.3M2.4 21h22.3M2.4 30h22.3M2.4 39h22.3M2.4 48h22.3M2.4 57h22.3M2.4 66h22.3M2.4 75h22.3" stroke="#6f8aa6" stroke-width=".6" opacity=".45"/>
    <rect x="2.4" y="86.6" width="22.3" height="4.2" fill="#3aa0f0"/>
   </g>
   <use href="#bar1" x="41.1"/>
  </svg>
  <div class="abs" style="left:12px;top:110px;width:44px;text-align:center;font-family:'Liberation Sans',sans-serif;font-size:12.5px;line-height:16px;letter-spacing:-.2px;color:#111">CPU</div>
  <div class="abs" style="left:53px;top:110px;width:44px;text-align:center;font-family:'Liberation Sans',sans-serif;font-size:12.5px;line-height:16px;letter-spacing:-.2px;color:#111">RAM</div>
  <div class="abs" style="left:100px;top:8px;width:37.5px;text-align:right;font-size:10px;line-height:17.6px;color:#4a4a4a;letter-spacing:.2px">100<br>80<br>60<br>40<br>20<br>0</div>
  <svg class="abs" style="left:139px;top:14px" width="145.5" height="92.5" viewBox="0 0 145.5 92.5">
   <defs><linearGradient id="gr1" x1="0" y1="0" x2=".55" y2="1"><stop offset="0" stop-color="#56789a"/><stop offset=".5" stop-color="#264d70"/><stop offset="1" stop-color="#183c5e"/></linearGradient></defs>
   <rect x=".8" y=".8" width="143.9" height="90.9" fill="#0e3050" stroke="#666a70" stroke-width="1.6"/>
   <path d="M1.6 1.6H143.9L1.6 58Z" fill="url(#gr1)" opacity=".62"/>
   <path d="M2 90.3 L30 90.3 L34 90.6 L40 89.8 L70 90.3 L76 90 L80 88.6 L84 90 L98 90.4 L104 89.8 L128 90.3 L134 89.6 L143.5 90 L143.5 91 L2 91Z" fill="#2fb86a"/>
   <path d="M2 89.4 L30 89.5 L76 89.4 L80 87.8 L84 89.4 L143.5 89.5" fill="none" stroke="#2a9be0" stroke-width="1.4"/>
  </svg>
  <svg class="abs" style="left:289px;top:50px" width="14" height="18" viewBox="0 0 14 18"><path d="M3.5 3.5l6 5.5-6 5.5" fill="none" stroke="#222" stroke-width="2.6"/></svg>
  <svg class="abs" style="left:134px;top:112.5px" width="12" height="12" viewBox="0 0 14 14"><path d="M7 1.2L12.6 7H9.6V12.4H4.4V7H1.4Z" fill="#2d8fe8" stroke="#1a62b0" stroke-width=".8"/></svg>
  <div class="lbl" style="left:147.5px;top:110px;font-size:11px;letter-spacing:.5px;color:#222">1 KB/s</div>
  <svg class="abs" style="left:186px;top:113px" width="12" height="12" viewBox="0 0 14 14"><path d="M7 12.8L12.6 7H9.6V1.6H4.4V7H1.4Z" fill="#3fc83a" stroke="#1f8f22" stroke-width=".8"/></svg>
  <div class="lbl" style="left:199.5px;top:110px;font-size:11px;letter-spacing:.5px;color:#222">1 KB/s</div>
 </div>
 <!-- card 3 -->
 <div class="card" style="top:412px">
  <svg class="abs" style="left:19px;top:30.5px" width="20" height="12" viewBox="0 0 20 12"><path d="M4.5 9.5l5-5 5 5" fill="none" stroke="#b4b4ba" stroke-width="2.6"/></svg>
  <div class="abs" style="left:0;top:56px;width:56px;text-align:center;font-size:11px;line-height:16px;letter-spacing:.3px">1/5</div>
  <svg class="abs" style="left:19px;top:82px" width="20" height="12" viewBox="0 0 20 12"><path d="M4.5 2.5l5 5 5-5" fill="none" stroke="#2c2c2c" stroke-width="2.6"/></svg>
  <div class="row" style="top:8px;background:#f0f1f7"><i><svg width="14" height="14" viewBox="0 0 14 14"><use href="#inf"/></svg></i><span>System successfully started Mysql...</span></div>
  <div class="row" style="top:32px;background:#e3e5ee;letter-spacing:.29px"><i><svg width="14" height="14" viewBox="0 0 14 14"><use href="#inf"/></svg></i><span>System successfully started Web S...</span></div>
  <div class="row" style="top:56px;background:#f0f1f7;letter-spacing:.29px"><i><svg width="14" height="14" viewBox="0 0 14 14"><use href="#inf"/></svg></i><span>System successfully started Web S...</span></div>
  <div class="row" style="top:80px;background:#dfe0ea"><i><svg width="14" height="14" viewBox="0 0 14 14"><use href="#inf"/></svg></i><span>Windows file service was started.</span></div>
  <div class="row" style="top:104px;background:#f0f1f7"><i><svg width="14" height="14" viewBox="0 0 14 14"><use href="#inf"/></svg></i><span>Windows file service was stopped.</span></div>
 </div>
 <!-- card 4 -->
 <div class="card" style="top:592px">
  <div class="abs" style="left:54px;top:32px;width:254px;height:97px;background:#fff"></div>
  <svg class="abs" style="left:19px;top:30.5px" width="20" height="12" viewBox="0 0 20 12"><path d="M4.5 9.5l5-5 5 5" fill="none" stroke="#a4a4aa" stroke-width="2.6"/></svg>
  <div class="abs" style="left:0;top:56px;width:56px;text-align:center;font-size:11px;line-height:16px;letter-spacing:.3px">1/1</div>
  <svg class="abs" style="left:19px;top:82px" width="20" height="12" viewBox="0 0 20 12"><path d="M4.5 2.5l5 5 5-5" fill="none" stroke="#a4a4aa" stroke-width="2.6"/></svg>
  <div class="row" style="top:8px">
   <svg class="abs" style="left:6px;top:4px" width="15" height="15" viewBox="0 0 24 24"><path d="M12 1 C8.4 1 7 3.8 7.3 7 C7.5 9.6 8.6 11.2 9.8 12.3 L9.5 14.4 C6.2 15.8 2 17 1.4 23 L22.6 23 C22 17 17.8 15.8 14.5 14.4 L14.2 12.3 C15.4 11.2 16.5 9.6 16.7 7 C17 3.8 15.6 1 12 1 Z" fill="#4a4a4a"/></svg>
   <span style="left:24px">admin</span><span style="left:71px">HTTP</span><span style="left:125px">00:24:24</span>
   <svg class="abs" style="left:226px;top:4px" width="17" height="13" viewBox="0 0 18 14"><path d="M2 10.5 L4.5 8 L3.5 5.5 L7 2 L8 3 L10 1 L11 2 L9 4 L10.5 5.5 L12.5 3.5 L13.5 4.5 L11.5 6.5 L12.5 7.5 L9 11 L6.5 10 L4 12.5 Z" fill="#2b2b2b"/><circle cx="13.6" cy="9.8" r="3" fill="#fbe9e9" stroke="#d83a3a" stroke-width="1.3"/><path d="M11.6 7.9l4 3.8" stroke="#d83a3a" stroke-width="1.2"/></svg>
  </div>
 </div>
 <!-- bottom tab -->
 <svg class="abs" style="left:270px;top:734px" width="78" height="24" viewBox="0 0 78 24">
  <path d="M0 24 L22 3.5 L78 3.5 L78 24 Z" fill="#f3f5fa" stroke="#c5cbd8" stroke-width="1"/>
  <path d="M35 9.5l6.5 6 6.5-6" fill="none" stroke="#222" stroke-width="2.6"/>
 </svg>
</div>
</div>
<!-- watermark -->
<svg class="abs" style="left:1630px;top:886px" width="260" height="73" viewBox="0 0 260 73">
 <defs><linearGradient id="wm1" x1="0" y1="0" x2="0" y2="1"><stop offset="0" stop-color="#dfe6f7"/><stop offset=".5" stop-color="#b4c3ec"/><stop offset="1" stop-color="#97ace4"/></linearGradient></defs>
 <g opacity=".8">
  <rect x="13" y="13" width="51" height="48" rx="5" transform="rotate(12 38.5 37)" fill="url(#wm1)"/>
  <path d="M30 24 L48 46 M24 40 L53 31" stroke="#f4f6fc" stroke-width="5" stroke-linecap="round" opacity=".95"/>
 </g>
 <text x="73" y="49" font-family="Liberation Sans,sans-serif" font-size="27" fill="#7f93c8" opacity=".78" textLength="179" lengthAdjust="spacingAndGlyphs" letter-spacing="0">xtremehardware.com</text>
</svg>
<svg width="0" height="0" style="position:absolute">
 <defs>
  <radialGradient id="infg" cx=".5" cy=".3" r=".8"><stop offset="0" stop-color="#8cc0f4"/><stop offset=".5" stop-color="#3f88dc"/><stop offset="1" stop-color="#1f5fb8"/></radialGradient>
  <g id="inf"><circle cx="7" cy="7" r="6.6" fill="url(#infg)"/><rect x="6" y="5.6" width="2.2" height="5.6" fill="#fff"/><circle cx="7.1" cy="3.6" r="1.3" fill="#fff"/></g>
 </defs>
</svg>
</div><!--root-->
</body>
</html>
